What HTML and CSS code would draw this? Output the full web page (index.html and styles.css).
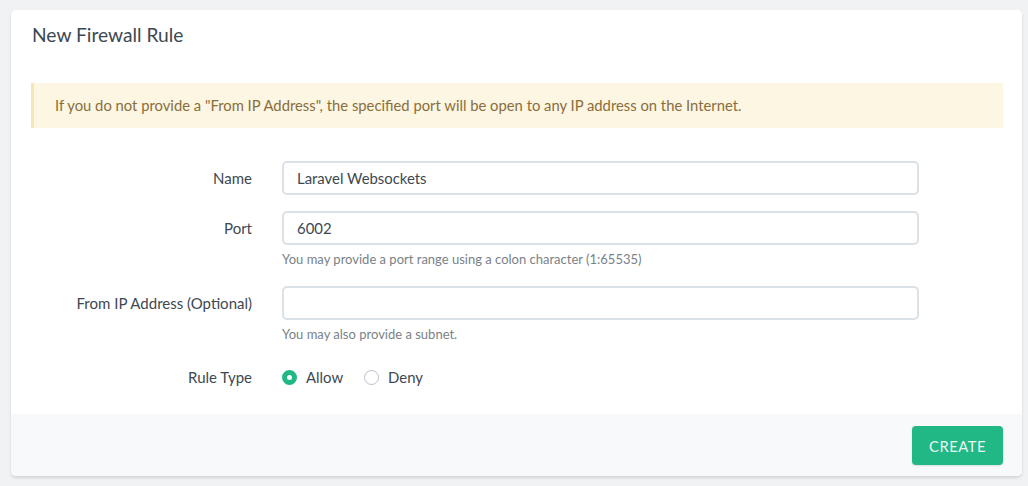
FILE: index.html
```html
<!DOCTYPE html>
<html lang="en">

<head>
    <meta charset="UTF-8">
    <meta name="viewport" content="width=device-width, initial-scale=1.0">
    <title>New Firewall Rule</title>
    <link rel="stylesheet" href="styles.css">
</head>

<body>
    <div class="card">
        <div class="card-header">New Firewall Rule</div>

        <div class="card-body">
            <div class="alert">
                If you do not provide a "From IP Address", the specified port will be open to any IP address on the Internet.
            </div>

            <div class="form-row">
                <label class="form-label">Name</label>
                <div class="form-field">
                    <input class="form-input" type="text" value="Laravel Websockets">
                </div>
            </div>

            <div class="form-row">
                <label class="form-label">Port</label>
                <div class="form-field">
                    <input class="form-input" type="text" value="6002">
                    <p class="help">You may provide a port range using a colon character (1:65535)</p>
                </div>
            </div>

            <div class="form-row">
                <label class="form-label">From IP Address (Optional)</label>
                <div class="form-field">
                    <input class="form-input" type="text" value="">
                    <p class="help">You may also provide a subnet.</p>
                </div>
            </div>

            <div class="form-row radio-row">
                <label class="form-label">Rule Type</label>
                <div class="form-field radios">
                    <span class="radio"><span class="dot checked"></span>Allow</span>
                    <span class="radio"><span class="dot"></span>Deny</span>
                </div>
            </div>
        </div>

        <div class="card-footer">
            <button class="btn-create">Create</button>
        </div>
    </div>
</body>

</html>
```

FILE: styles.css
```css
body {
    margin: 0;
    padding: 10px 6px 9px 11px;
    background-color: #f1f2f4;
    font-family: Lato, "Noto Sans", sans-serif;
    color: #3d4852;
}

.card {
    background: #fff;
    border-radius: 5px;
    box-shadow: 0 2px 3px rgba(0, 0, 0, 0.12);
    overflow: hidden;
}

.card-header {
    padding: 13px 21px 0;
    height: 45px;
    font-size: 19.2px;
    line-height: 24px;
    color: #3d4852;
}

.card-body {
    padding: 15px 19px 20px 20px;
}

.alert {
    background-color: #fcf6e3;
    border-left: 3px solid #f8e5b6;
    color: #8a6d3b;
    font-size: 14.8px;
    line-height: 20px;
    padding: 12px 21px 13px;
}

.form-row {
    display: grid;
    grid-template-columns: 221px 637px;
    column-gap: 30px;
    margin-top: 16px;
}

.alert + .form-row {
    margin-top: 33px;
}

.form-label {
    text-align: right;
    font-size: 15px;
    line-height: 34px;
    color: #3d4852;
}

.form-input {
    display: block;
    box-sizing: border-box;
    width: 100%;
    height: 34px;
    margin: 0;
    padding: 0 13px;
    border: 2px solid #dae1e7;
    border-radius: 5px;
    font-family: inherit;
    font-size: 14.9px;
    color: #3d4852;
    outline: none;
}

.help {
    margin: 5px 0 2px;
    font-size: 13px;
    line-height: 18px;
    color: #7a8288;
}

.radio-row {
    margin-top: 15px;
}

.radios {
    display: flex;
    align-items: center;
    gap: 21px;
    font-size: 14.9px;
}

.radio {
    display: flex;
    align-items: center;
    gap: 9px;
}

.dot {
    box-sizing: border-box;
    width: 15px;
    height: 15px;
    border-radius: 50%;
    border: 1px solid #b8c2cc;
    background: #fff;
}

.dot.checked {
    border: 5px solid #21b886;
}

.card-footer {
    background-color: #f8f9fa;
    padding: 12px 19px 11px;
    display: flex;
    justify-content: flex-end;
}

.btn-create {
    background-color: #21b886;
    color: #e9f7f1;
    border: 0;
    border-radius: 4px;
    width: 91px;
    height: 39px;
    font-family: inherit;
    font-size: 14.8px;
    letter-spacing: 0.5px;
    text-transform: uppercase;
    box-shadow: 0 1px 2px rgba(0, 0, 0, 0.12);
}
```
